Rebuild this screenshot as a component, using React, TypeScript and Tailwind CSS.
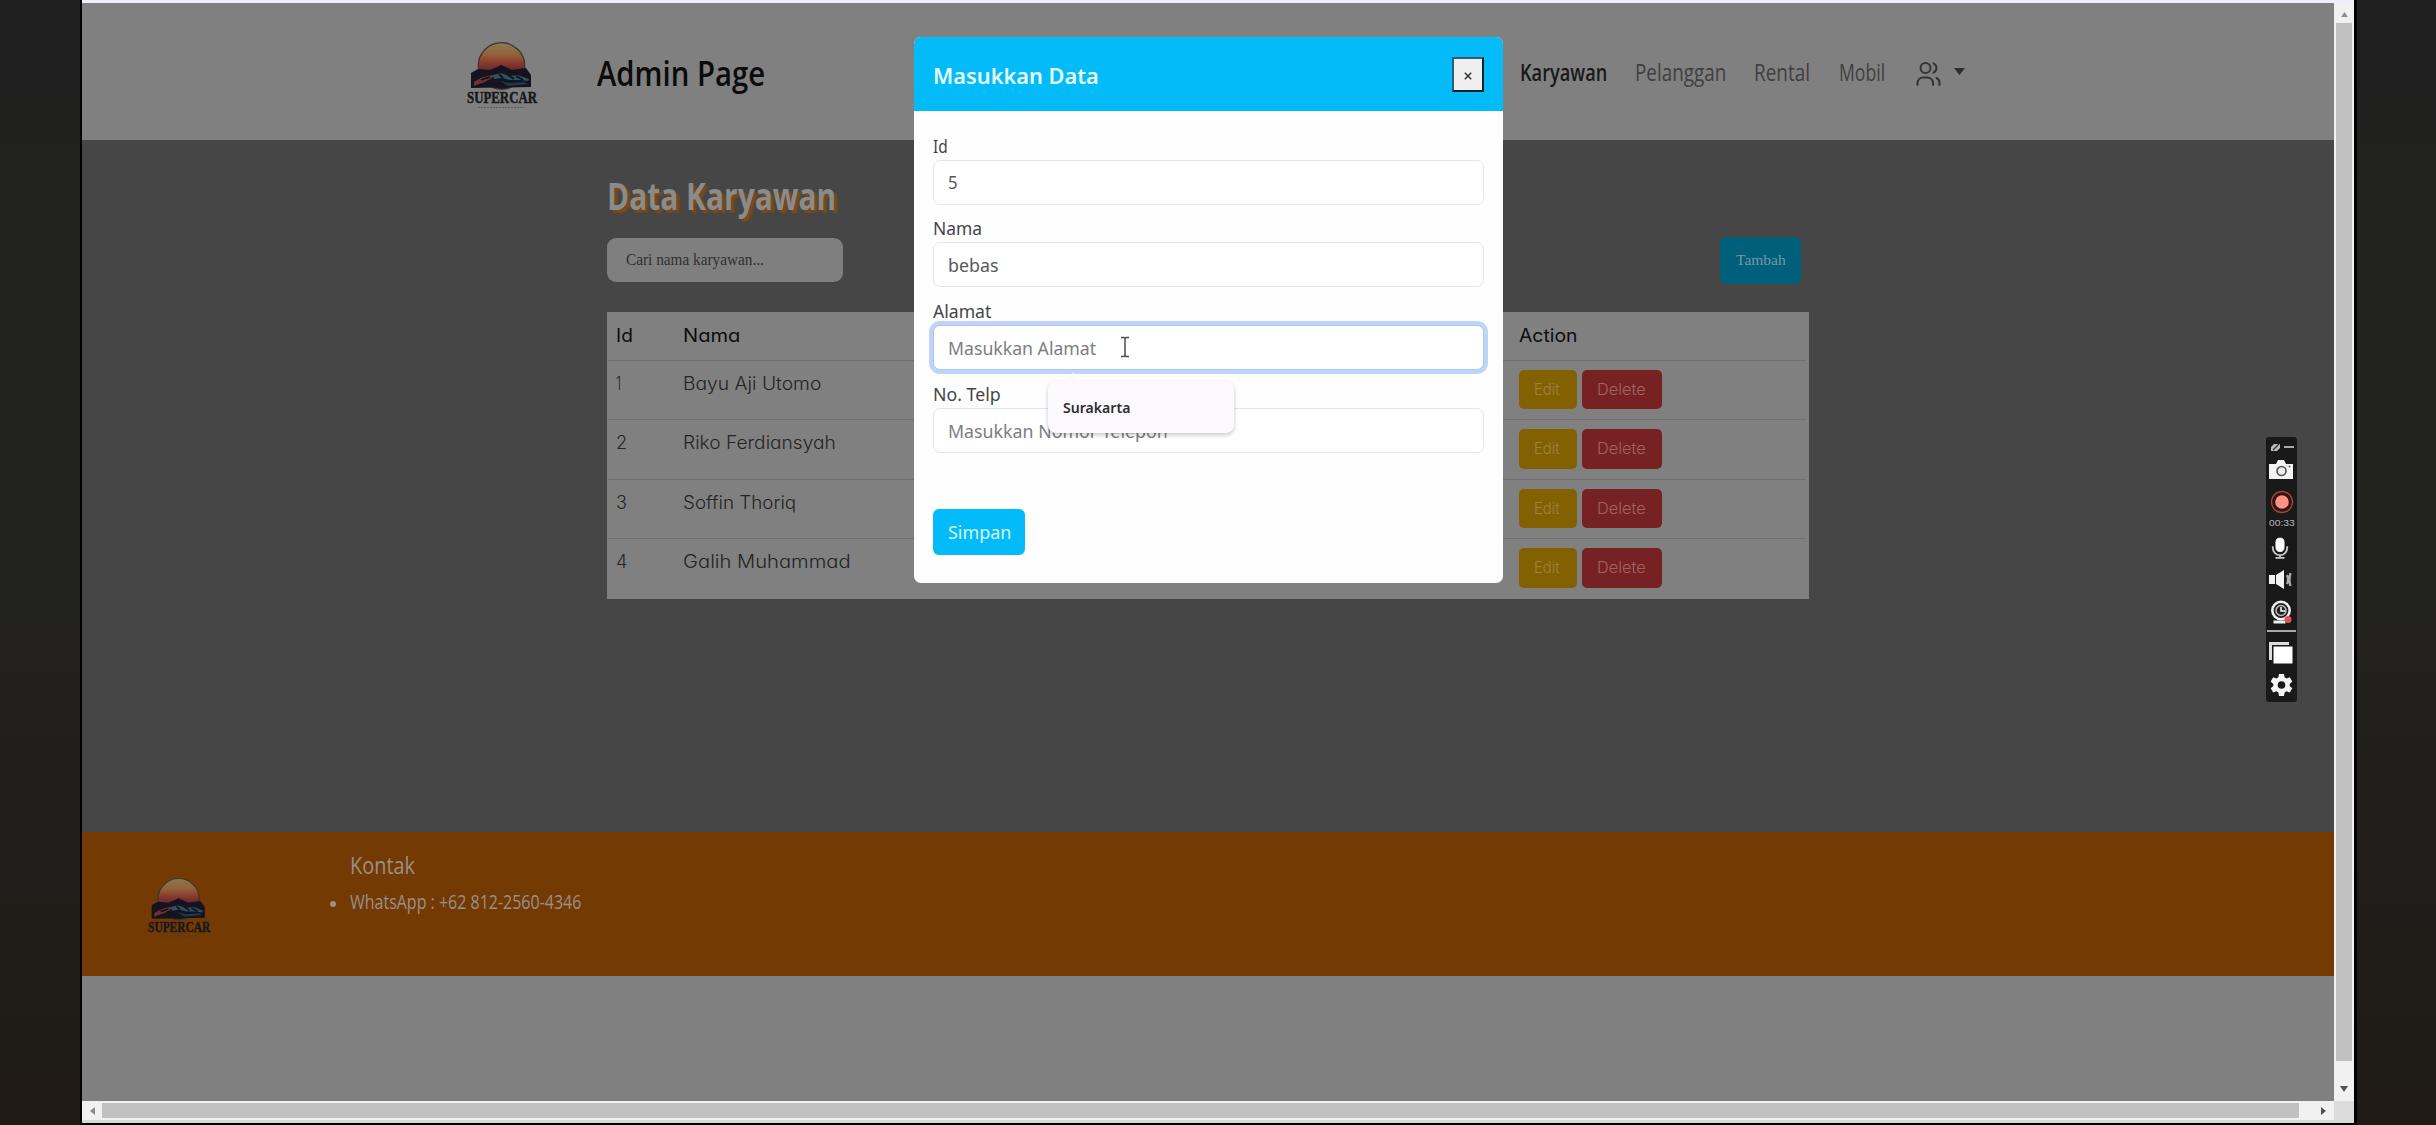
import { useLayoutEffect, useRef, useState } from "react";
import type { ReactNode } from "react";
import clsx from "clsx";

/* Text squeezed or stretched horizontally to an exact width. */
function Fit({ w, className, children }: { w: number; className?: string; children: ReactNode }) {
  const ref = useRef<HTMLSpanElement>(null);
  const [scale, setScale] = useState(1);
  useLayoutEffect(() => {
    if (ref.current) setScale(w / ref.current.offsetWidth);
  }, [w]);
  return (
    <span className={clsx("block whitespace-nowrap", className)} style={{ width: w }}>
      <span ref={ref} className="inline-block origin-left" style={{ transform: `scaleX(${scale})` }}>
        {children}
      </span>
    </span>
  );
}

function Logo({ className, id }: { className: string; id: string }) {
  return (
    <svg viewBox="0 0 74 70" className={clsx("overflow-visible", className)}>
      <defs>
        <linearGradient id={id} x1="0" y1="0" x2="0" y2="1">
          <stop offset="0" stopColor="#8a7b4c" />
          <stop offset="0.26" stopColor="#93603a" />
          <stop offset="0.44" stopColor="#87392c" />
          <stop offset="0.6" stopColor="#642532" />
          <stop offset="0.75" stopColor="#2a1528" />
        </linearGradient>
      </defs>
      <circle cx="35.500" cy="25" r="23.300" fill={`url(#${id})`} stroke="#3d3430" strokeWidth="1.200" />
      <path d="M5 32 L12 28 L24 29 L31 26 L35 24 L40 26 L46 29 L60 27 L65 34 L65 46 L5 47 Z" fill="#15131f" />
      <path d="M8 41 Q14 36 26 34 L29 35 L24 38 L19 41 L13 43 L8 45Z" fill="#6e3138" />
      <path d="M27 34 L35 32 L43 35 L52 34 L63 38 L62 40 L54 39 L44 39 L36 37 L28 38Z" fill="#2f5060" />
      <path d="M34 40 L44 42 L58 41 L62 43 L42 45Z" fill="#1a3a48" />
      <path d="M42 34 l6 4 M50 35 l7 4 M15 39 l9 -3 M33 33 l4 4" stroke="#10111a" strokeWidth="1.800" />
      <text x="1" y="62" textLength="70" lengthAdjust="spacingAndGlyphs" fontFamily="Liberation Serif, serif" fontWeight="700" fontSize="17.500" fill="#18181b" stroke="#18181b" strokeWidth="0.500">
        SUPERCAR
      </text>
      <path d="M12 66.500 H58" stroke="#3d3a38" strokeWidth="1.200" strokeDasharray="2 1" opacity="0.500" />
    </svg>
  );
}

const rows = [
  { id: 1, name: "Bayu Aji Utomo", w: 138, iw: 5 },
  { id: 2, name: "Riko Ferdiansyah", w: 153, iw: 11 },
  { id: 3, name: "Soffin Thoriq", w: 113, iw: 11 },
  { id: 4, name: "Galih Muhammad", w: 168, iw: 11 },
];

const condensed = "font-['Open_Sans',sans-serif]";
const geometric = "font-['Inter',sans-serif] [font-feature-settings:'cv11']";
const segoe = "font-['Noto_Sans',sans-serif]";

function Header() {
  return (
    <header className={clsx("flex h-[137px] items-start bg-[#808080] pl-[384px]", condensed)}>
      <Logo id="sunTop" className="mt-[38px] h-[70px] w-[74px]" />
      <Fit w={168} className="mt-[46px] ml-[57px] text-[34px] leading-[48px] font-semibold text-[#0b0b0b]">Admin Page</Fit>
      <nav className="mt-[53px] ml-[755px] flex text-[23px] leading-[32px] text-[#3f3f3f]">
        <Fit w={87} className="font-semibold text-[#191919]">Karyawan</Fit>
        <Fit w={91} className="ml-[28px] font-medium">Pelanggan</Fit>
        <Fit w={56} className="ml-[28px] font-medium">Rental</Fit>
        <Fit w={46} className="ml-[29px] font-medium">Mobil</Fit>
        <svg viewBox="0 0 25 26" className="mt-[5px] ml-[31px] h-[26px] w-[25px]" fill="none" stroke="#333" strokeWidth="2" strokeLinecap="round">
          <circle cx="9.500" cy="7" r="5" />
          <path d="M17.500 2.300a5.200 5.200 0 0 1 0 9.400M1.500 24v-2a5.500 5.500 0 0 1 5.500-5.500h4.500a5.500 5.500 0 0 1 5.500 5.500v2M20.500 17q3 1.300 3 4.500v2.500" />
        </svg>
        <svg viewBox="0 0 11 7" className="mt-[12px] ml-[13px] h-[7px] w-[11px]"><path d="M0 0h11L5.500 7z" fill="#2d2d2d" /></svg>
      </nav>
    </header>
  );
}

function Main() {
  return (
    <main className="flex h-[692px] flex-col bg-[#464646] pl-[525px]">
      <Fit w={229} className={clsx("mt-[29px] h-[54px] text-[37px] leading-[54px] font-bold text-[#8b8b8b] [text-shadow:4px_3px_2px_#7c4a18]", condensed)}>Data Karyawan</Fit>
      <div className="mt-[14px] flex w-[1194px] items-start justify-between">
        <div className="mt-[1px] h-[44px] w-[236px] rounded-[9px] bg-[#7f7f7f] pt-[11px] pl-[19px]">
          <Fit w={138} className="font-['Liberation_Serif',serif] text-[16.500px] leading-[22px] text-[#303030]">Cari nama karyawan...</Fit>
        </div>
        <div className="h-[47px] w-[81px] rounded-[6px] bg-[#005f7b] pt-[12px] pl-[16px]">
          <Fit w={50} className="font-['Liberation_Serif',serif] text-[15.500px] leading-[22px] text-[#7399a6]">Tambah</Fit>
        </div>
      </div>
      <div className={clsx("mt-[27.500px] h-[287.500px] w-[1202px] bg-[#808080] pr-[3px] pl-[1px]", geometric)}>
        <div className="flex h-[49px] items-start border-b border-[#707070] pt-[10px] pl-[8px] text-[18px] leading-[28px] font-normal text-[#0d0e10]">
          <Fit w={17} className="mr-[50px]">Id</Fit>
          <Fit w={57}>Nama</Fit>
          <Fit w={58} className="ml-[779px]">Action</Fit>
        </div>
        {rows.map((r) => (
          <div key={r.id} className="flex h-[59.500px] items-start border-b border-[#707070] pl-[8px] text-[18px] leading-[28px] font-light text-[#242424] last:border-b-0">
            <div className="mt-[9px] w-[67px]"><Fit w={r.iw}>{r.id}</Fit></div>
            <div className="mt-[9px] w-[836px]"><Fit w={r.w}>{r.name}</Fit></div>
            <div className="mt-[9px] flex gap-[5px] text-[16px] leading-[24px] text-[#9c8248]">
              <div className="h-[39.500px] w-[58px] rounded-[5px] bg-[#846100] pt-[7px] pl-[15px]"><Fit w={26}>Edit</Fit></div>
              <div className="h-[39.500px] w-[80px] rounded-[5px] bg-[#772222] pt-[7px] pl-[15px] text-[#a26262]"><Fit w={49}>Delete</Fit></div>
            </div>
          </div>
        ))}
      </div>
    </main>
  );
}

function Footer() {
  return (
    <footer className={clsx("flex h-[144px] items-start bg-[#733a03] text-[#999089]", condensed)}>
      <Logo id="sunFoot" className="mt-[45px] ml-[65px] h-[62px] w-[66px]" />
      <div className="mt-[16px] ml-[116px]">
        <Fit w={65} className="ml-[21px] text-[23px] leading-[34px] font-medium">Kontak</Fit>
        <div className="mt-[5px] flex items-center">
          <i className="mt-[3px] mr-[14px] ml-[1px] h-[6px] w-[6px] rounded-full bg-[#999089]" />
          <Fit w={231} className="text-[20px] leading-[30px] font-medium">WhatsApp : +62 812-2560-4346</Fit>
        </div>
      </div>
    </footer>
  );
}

function Field({ label, lw, value, vw, muted, focus }: { label: string; lw: number; value: string; vw: number; muted?: boolean; focus?: boolean }) {
  return (
    <div className="h-[82.800px]">
      <Fit w={lw} className="h-[28px] text-[18.500px] leading-[28px] text-[#434548]">{label}</Fit>
      <div className={clsx("flex h-[45px] items-center rounded-[7px] border bg-white pl-[14px] text-[18.500px]", focus ? "border-[#a9c8f3] shadow-[0_0_0_4px_#bfd5f5]" : "border-[#e3e6ea]")}>
        <Fit w={vw} className={muted ? "text-[#7b7e82]" : "text-[#55585b]"}>{value}</Fit>
      </div>
    </div>
  );
}

function Modal() {
  return (
    <div className={clsx("absolute top-[37px] left-[914px] h-[546px] w-[589px] overflow-hidden rounded-[7px] bg-[#fefefe]", segoe)}>
      <div className="flex h-[74px] items-start justify-between bg-[#02bbf8] pr-[19px] pl-[18.500px]">
        <Fit w={166} className="mt-[24px] text-[21px] leading-[30px] font-semibold text-[#e6fbff]">Masukkan Data</Fit>
        <div className="mt-[20px] flex h-[35px] w-[32px] items-center justify-center border-2 border-t-[#2c5d70] border-r-[#0b2028] border-b-[#0b2028] border-l-[#2c5d70] bg-[#efefef] pt-[2px]">
          <svg viewBox="0 0 8 8" className="h-[8px] w-[8px]"><path d="M.8.8l6.400 6.400M7.200.8L.8 7.200" stroke="#333" strokeWidth="1.500" /></svg>
        </div>
      </div>
      <div className="pt-[20.700px] pr-[19px] pl-[18.500px]">
        <Field label="Id" lw={15} value="5" vw={10} />
        <Field label="Nama" lw={49} value="bebas" vw={50} />
        <Field label="Alamat" lw={58} value="Masukkan Alamat" vw={148} muted focus />
        <Field label="No. Telp" lw={68} value="Masukkan Nomor Telepon" vw={220} muted />
        <div className="mt-[46.300px] flex h-[46px] w-[92px] items-center rounded-[6px] bg-[#02bbf8] pl-[15px] text-[18.500px] text-[#d9f8ff]">
          <Fit w={63}>Simpan</Fit>
        </div>
      </div>
    </div>
  );
}

function Suggestion() {
  return (
    <div className="absolute top-[381px] left-[1048px] h-[52px] w-[186px] rounded-[8px] bg-[#fcfafd] pt-[14px] pl-[15px] shadow-[0_2px_4px_rgba(0,0,0,0.22)]">
      <svg viewBox="0 0 16 9" className="absolute -top-[9px] left-[17px] h-[10px] w-[16px]"><path d="M8 0l8 9H0z" fill="#fcfafd" /></svg>
      <Fit w={67} className={clsx("text-[14.500px] leading-[24px] font-semibold text-[#2e2e33]", segoe)}>Surakarta</Fit>
    </div>
  );
}

function Recorder() {
  return (
    <div className="absolute top-[437px] left-[2266px] flex h-[265px] w-[31px] flex-col items-center rounded-[3px] bg-[#191919]">
      <svg viewBox="0 0 24 10" className="mt-[5px] h-[10px] w-[24px]">
        <path d="M1 9V5l3-3h6v4L7 9z" fill="#bbb" /><path d="M3 8l6-6" stroke="#333" strokeWidth="1.200" /><path d="M14 5h10" stroke="#aaa" strokeWidth="2" />
      </svg>
      <svg viewBox="0 0 24 19" className="mt-[8px] mr-[1px] h-[19px] w-[24px]">
        <path d="M0 4h7l2-4h6l2 4h7v15H0z" fill="#f4f4f4" /><circle cx="12.500" cy="11" r="4.500" fill="#eee" stroke="#555" strokeWidth="1.700" /><circle cx="20.500" cy="6.500" r="1" fill="#666" />
      </svg>
      <svg viewBox="0 0 24 24" className="mt-[11px] h-[24px] w-[24px]">
        <circle cx="12" cy="12" r="10.500" fill="#321412" stroke="#a0443c" strokeWidth="1.300" /><circle cx="12" cy="12" r="6.800" fill="#ff9186" />
      </svg>
      <Fit w={26} className="mt-[2px] font-['Liberation_Sans',sans-serif] text-[9.500px] leading-[14px] text-[#b4b9bd]">00:33</Fit>
      <svg viewBox="0 0 20 24" className="mt-[6px] mr-[3px] h-[24px] w-[18px] shrink-0" fill="none" stroke="#c9c9c9">
        <rect x="5.500" y="1" width="9" height="15" rx="4.500" fill="#fff" stroke="#fff" /><path d="M2 10v2a8 8 0 0 0 16 0v-2M10 20v3M5 23h10" strokeWidth="2" />
      </svg>
      <svg viewBox="0 0 24 19" className="mt-[10px] mr-[1px] h-[19px] w-[24px] shrink-0">
        <path d="M0 5h6v9H0zM7 5l8-5v19l-8-5z" fill="#f2f2f2" /><path d="M18 5q2 4.500 0 9M21.500 3q-2 6.500 0 13" fill="none" stroke="#aaa" strokeWidth="2.300" />
      </svg>
      <svg viewBox="0 0 22 24" className="mt-[11px] mr-[1px] h-[24px] w-[22px] shrink-0">
        <circle cx="11" cy="10.500" r="8.700" fill="#222" stroke="#f0f0f0" strokeWidth="2.500" /><circle cx="11" cy="10.500" r="5" fill="none" stroke="#bbb" strokeWidth="1.500" /><path d="M11 7v4h4" stroke="#fff" strokeWidth="1.500" fill="none" />
        <path d="M3.500 22h12" stroke="#eee" strokeWidth="3" /><circle cx="18" cy="19.500" r="3.500" fill="#d9594f" />
      </svg>
      <div className="mt-[6px] h-[1.500px] w-[29px] shrink-0 bg-[#aaa]" />
      <svg viewBox="0 0 24 22" className="mt-[10px] mr-[1px] h-[22px] w-[24px] shrink-0">
        <path d="M0 0h20v3H3v15H0z" fill="#ddd" /><path d="M4.500 4.500H23.500V21.500H4.500z" fill="#fff" />
      </svg>
      <svg viewBox="0 0 24 24" className="mt-[9px] mr-[1px] h-[24px] w-[25px] shrink-0" fill="#f4f4f4">
        <path fillRule="evenodd" d="M9.500 1h5l.6 3.300 2 1.200 3.200-1.200 2.500 4.300L20.200 11v2l2.600 2.200-2.500 4.300-3.200-1.200-2 1.200-.6 3.500h-5l-.6-3.500-2-1.200-3.200 1.200-2.500-4.300L3.800 13v-2L1.200 8.600l2.500-4.300 3.200 1.200 2-1.200zM12 8.200a3.800 3.800 0 1 0 0 7.600 3.800 3.800 0 0 0 0-7.600z" />
      </svg>
    </div>
  );
}

export default function App() {
  return (
    <div className="relative flex h-[1125px] w-[2436px] overflow-hidden bg-linear-to-b from-[#202020] via-[#22221f] to-[#1f1a16]">
      <div className="w-[80px] shrink-0" />
      <div className="h-full shrink-0 border-x-[2px] border-r-[3px] border-b-[2px] border-black">
        <div className="h-[3px] bg-[#f1eef8]" />
        <div className="flex h-[1098px]">
          <div className="w-[2252px] bg-[#808080]">
            <Header />
            <Main />
            <Footer />
          </div>
          <div className="flex w-[20px] flex-col items-center bg-[#f1f1f1]">
            <svg viewBox="0 0 8 6" className="mt-[9px] h-[5px] w-[7px]"><path d="M4 0l4 6H0z" fill="#8b8b8b" /></svg>
            <div className="mt-[6px] h-[1038px] w-[16px] bg-[#c1c1c1]" />
            <svg viewBox="0 0 8 6" className="mt-[25px] h-[6px] w-[8px]"><path d="M0 0h8L4 6z" fill="#505050" /></svg>
          </div>
        </div>
        <div className="flex h-[22px] items-center border-b-[3px] border-[#d9d9d9] bg-[#f1f1f1]">
          <div className="flex w-[20px] justify-center"><svg viewBox="0 0 5 8" className="h-[8px] w-[5px]"><path d="M5 0v8L0 4z" fill="#8b8b8b" /></svg></div>
          <div className="h-[15px] w-[2197px] bg-[#c1c1c1]" />
          <div className="flex w-[35px] pl-[22px]"><svg viewBox="0 0 5 8" className="h-[8px] w-[5px]"><path d="M0 0v8l5-4z" fill="#505050" /></svg></div>
          <div className="h-full w-[20px] bg-[#dcdcdc]" />
        </div>
      </div>
      <Modal />
      <Suggestion />
      <svg viewBox="0 0 10 22" className="absolute top-[336px] left-[1120px] h-[22px] w-[10px]" fill="none" stroke="#4c4c4c" strokeWidth="1.500"><path d="M1 1.500h3l1 1 1-1h3M5 2.500v17M1 20.500h3l1-1 1 1h3" /></svg>
      <Recorder />
    </div>
  );
}
